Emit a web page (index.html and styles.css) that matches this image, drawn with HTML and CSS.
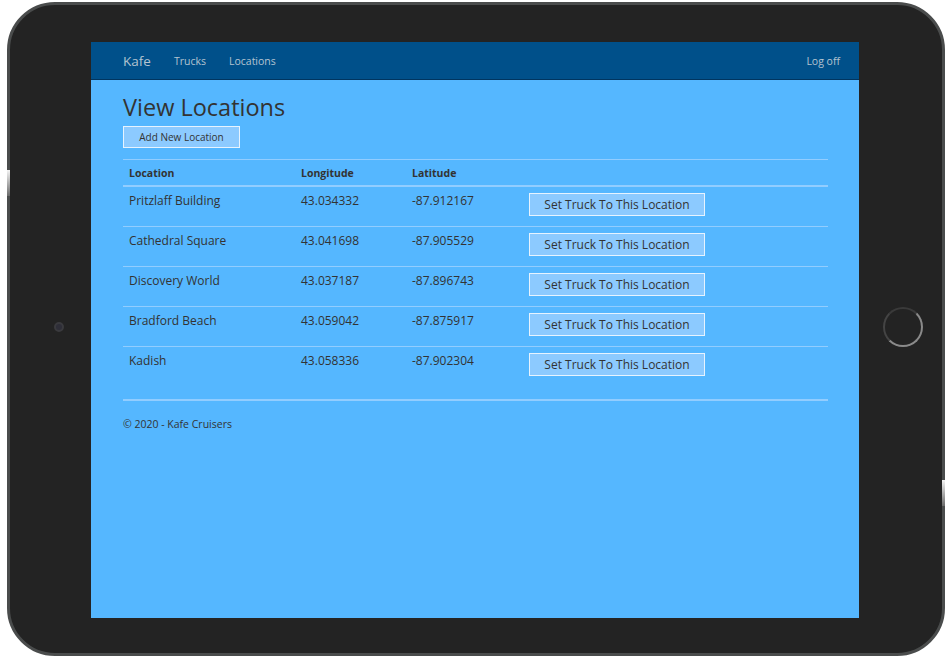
FILE: index.html
```html
<!DOCTYPE html>
<html>
<head>
<meta charset="utf-8">
<title>View Locations - Kafe</title>
<link rel="stylesheet" href="styles.css">
</head>
<body>
<div class="device">
  <span class="side-btn side-left"></span>
  <span class="side-btn side-right"></span>
  <span class="camera"></span>
  <span class="home"></span>
  <div class="screen">
    <nav class="navbar">
      <div class="nav-left">
        <a class="brand">Kafe</a>
        <a class="nav-link">Trucks</a>
        <a class="nav-link">Locations</a>
      </div>
      <a class="nav-link">Log off</a>
    </nav>
    <main class="content">
      <h2 class="title">View Locations</h2>
      <button class="btn btn-add">Add New Location</button>
      <table class="table">
        <thead>
          <tr><th class="c1">Location</th><th class="c2">Longitude</th><th class="c3">Latitude</th><th></th></tr>
        </thead>
        <tbody>
          <tr><td>Pritzlaff Building</td><td>43.034332</td><td>-87.912167</td><td><button class="btn btn-set">Set Truck To This Location</button></td></tr>
          <tr><td>Cathedral Square</td><td>43.041698</td><td>-87.905529</td><td><button class="btn btn-set">Set Truck To This Location</button></td></tr>
          <tr><td>Discovery World</td><td>43.037187</td><td>-87.896743</td><td><button class="btn btn-set">Set Truck To This Location</button></td></tr>
          <tr><td>Bradford Beach</td><td>43.059042</td><td>-87.875917</td><td><button class="btn btn-set">Set Truck To This Location</button></td></tr>
          <tr><td>Kadish</td><td>43.058336</td><td>-87.902304</td><td><button class="btn btn-set">Set Truck To This Location</button></td></tr>
        </tbody>
      </table>
      <hr class="rule">
      <footer class="footer">© 2020 - Kafe Cruisers</footer>
    </main>
  </div>
</div>
</body>
</html>
```
FILE: styles.css
```css
* { box-sizing: border-box; }
html, body { margin: 0; padding: 0; background: #ffffff; }
body { font-family: "Open Sans", "Noto Sans", sans-serif; color: #333; }

.device {
  position: relative;
  margin: 2px 0 0 7px;
  width: 938px;
  height: 654px;
  border: 3px solid #4a4c4c;
  border-radius: 48px;
  background: #232323;
  padding: 37px 0 0 81px;
}
.side-btn {
  position: absolute;
  width: 3px;
  height: 26px;
  background: linear-gradient(#f4f4f4, #6a6a6a);
}
.side-left { left: -3px; top: 165px; }
.side-right { right: -3px; top: 475px; }
.camera {
  position: absolute;
  left: 44px;
  top: 317px;
  width: 10px;
  height: 10px;
  border-radius: 50%;
  background: #2e2e38;
  border: 2px solid #3a3a3e;
}
.home {
  position: absolute;
  left: 873px;
  top: 302px;
  width: 40px;
  height: 40px;
  border-radius: 50%;
  border: 2px solid #8a8a8a;
  border-top-color: #3a3a3a;
  border-left-color: #444;
}

.screen {
  width: 768px;
  height: 576px;
  background: #55b7ff;
  overflow: hidden;
}

.navbar {
  height: 38px;
  background: #00508a;
  border-bottom: 1px solid #003560;
  display: flex;
  align-items: center;
  justify-content: space-between;
  padding: 0 19px 0 32px;
}
.nav-left { display: flex; align-items: center; }
.brand {
  font-size: 13.5px;
  color: #b4c3d0;
  margin-right: 23px;
}
.nav-link {
  font-size: 10.5px;
  color: #b4c3d0;
  margin-right: 23px;
}
.navbar > .nav-link { margin-right: 0; }

.content {
  padding: 12px 31px 0 32px;
}
.title {
  margin: 0;
  font-size: 23.5px;
  font-weight: 400;
  line-height: 30px;
  color: #333;
}
.btn {
  font-family: "Open Sans", "Noto Sans", sans-serif;
  background: #8ccaff;
  border: 1px solid #e6f3ff;
  color: #333;
  padding: 0;
  border-radius: 0;
}
.btn-add {
  margin-top: 4px;
  width: 117px;
  height: 22px;
  font-size: 10px;
  display: block;
}

.table {
  margin-top: 11px;
  width: 705px;
  border-collapse: collapse;
  font-size: 12px;
}
.table th {
  text-align: left;
  font-weight: 700;
  font-size: 10.5px;
  padding: 5px 6px 4px;
  height: 25px;
  border-top: 1px solid #92cdff;
  border-bottom: 2px solid #92cdff;
  line-height: 16px;
}
.table .c1 { width: 172px; }
.table .c2 { width: 111px; }
.table .c3 { width: 117px; }
.table td {
  vertical-align: top;
  padding: 6px 6px 0;
  height: 40px;
  line-height: 16px;
  border-top: 1px solid #92cdff;
  color: #333;
}
.btn-set {
  display: block;
  margin-top: 0;
  width: 176px;
  height: 23px;
  font-size: 12px;
}

.rule {
  margin: 13px 0 0;
  border: 0;
  border-top: 2px solid #92cdff;
}
.footer {
  margin-top: 16px;
  font-size: 10.5px;
  color: #333;
}
```
